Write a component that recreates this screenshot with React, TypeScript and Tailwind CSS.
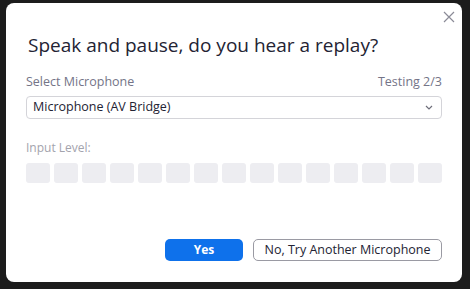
import React from 'react';

const levels = Array.from({ length: 15 }, (_, i) => i);

export default function App() {
    return (
        <div className="w-[470px] h-[289px] bg-[#1c1c1c] pl-[6px] pt-[3px] overflow-hidden" style={{ fontFamily: '"Open Sans", "Noto Sans", sans-serif' }}>
            <div className="relative w-[456px] h-[279px] bg-white rounded-[8px] px-[20px] flex flex-col">
                <button className="absolute right-[6px] top-[7px] w-[14px] h-[14px] flex items-center justify-center text-[#8b8b97]">
                    <svg width="12" height="12" viewBox="0 0 12 12" fill="none" stroke="currentColor" strokeWidth="1.2">
                        <path d="M1 1 L11 11 M11 1 L1 11" />
                    </svg>
                </button>

                <h1 className="mt-[30px] text-[19px] leading-[25px] text-[#232333] font-normal ml-[2px]">
                    Speak and pause, do you hear a replay?
                </h1>

                <div className="mt-[15px] flex items-center justify-between text-[12.5px] leading-[17px] text-[#747487]">
                    <span>Select Microphone</span>
                    <span>Testing 2/3</span>
                </div>

                <div className="mt-[6px] h-[23px] border border-[#d4d4d9] rounded-[4px] flex items-center justify-between pl-[6px] pr-[8px]">
                    <span className="text-[12.5px] text-[#232333]">Microphone (AV Bridge)</span>
                    <svg width="8" height="5" viewBox="0 0 8 5" fill="none" stroke="#6e6e7a" strokeWidth="1.2">
                        <path d="M1 1 L4 4 L7 1" />
                    </svg>
                </div>

                <div className="mt-[21px] text-[12px] leading-[16px] text-[#a3a3ad]">Input Level:</div>

                <div className="mt-[7px] flex gap-[4px]">
                    {levels.map(i => (
                        <div key={i} className="w-[24px] h-[20px] rounded-[3px] bg-[#ededf1]" />
                    ))}
                </div>

                <div className="mt-[56px] flex justify-end gap-[10px]">
                    <button className="w-[78px] h-[22px] rounded-[5px] bg-[#0e71eb] text-white text-[12px] font-bold flex items-center justify-center">
                        Yes
                    </button>
                    <button className="w-[189px] h-[22px] rounded-[5px] border border-[#9a9aa3] text-[#232333] text-[12.5px] flex items-center justify-center">
                        No, Try Another Microphone
                    </button>
                </div>
            </div>
        </div>
    );
}
